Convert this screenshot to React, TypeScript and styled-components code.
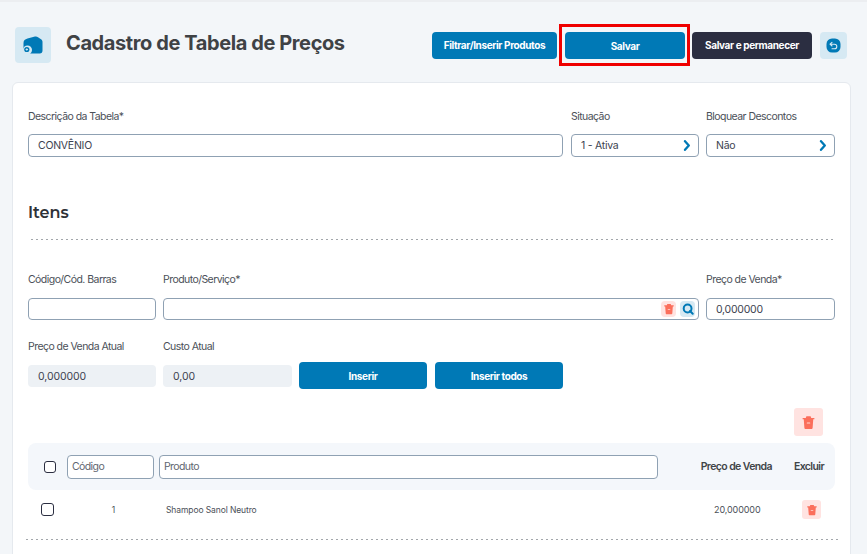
import React from "react";
import styled, { createGlobalStyle } from "styled-components";

const Global = createGlobalStyle`
  html, body { margin: 0; padding: 0; height: 100%; overflow: hidden; background: #f3f6f9; }
  * { box-sizing: border-box; }
  body { font-family: Inter, "Liberation Sans", sans-serif; color: #3f4448; }
`;

const Page = styled.div`
  width: 867px;
  height: 554px;
  overflow: hidden;
  border-top: 2px solid #eceef1;
  padding: 0 16px 0 12px;
`;
const Header = styled.header`
  display: flex;
  align-items: center;
  height: 80px;
  padding: 6px 4px 0 3px;
`;
const HeaderIconBox = styled.div`
  width: 36px;
  height: 36px;
  border-radius: 4px;
  background: #d6e9f3;
  display: flex;
  align-items: center;
  justify-content: center;
`;
const Title = styled.h1`
  flex: 1;
  margin: -4px 0 0 15px;
  font-size: 20px;
  line-height: 28px;
  font-weight: 700;
  letter-spacing: -0.4px;
  color: #3f4245;
`;
const Actions = styled.div`
  display: flex;
  align-items: center;
`;
const ActionButton = styled.button<{ $w: number; $dark?: boolean }>`
  width: ${(p) => p.$w}px;
  height: 27px;
  padding: 0;
  border: 0;
  border-radius: 4px;
  background: ${(p) => (p.$dark ? "#2b2e41" : "#0079b6")};
  color: #fff;
  font: 700 10px Inter, sans-serif;
  letter-spacing: -0.38px;
`;
const Highlight = styled.div`
  border: 3px solid #ef0000;
  padding: 5px 2px 4px 3px;
  margin: 0 2px;
  display: flex;
`;
const BackBox = styled.div`
  width: 27px;
  height: 27px;
  margin-left: 8px;
  border-radius: 4px;
  background: #d6e9f3;
  display: flex;
  align-items: center;
  justify-content: center;
`;
const Card = styled.main`
  height: 480px;
  background: #fff;
  border: 1px solid #e5e9ee;
  border-radius: 6px;
  padding: 26px 15px 0;
`;
const Row = styled.div<{ $mt?: number }>`
  display: flex;
  gap: 7px;
  align-items: flex-end;
  margin-top: ${(p) => p.$mt ?? 0}px;
`;
const Field = styled.div<{ $w?: number }>`
  ${(p) => (p.$w ? `width: ${p.$w}px; flex: none;` : "flex: 1;")}
  position: relative;
`;
const WideField = styled(Field)`
  margin-right: 1px;
`;
const Label = styled.div<{ $mb?: number }>`
  font-size: 10.5px;
  line-height: 16px;
  height: 16px;
  letter-spacing: -0.55px;
  color: #4b5058;
  margin-bottom: ${(p) => p.$mb ?? 10}px;
  white-space: nowrap;
`;
const Control = styled.div<{ $h?: number }>`
  height: ${(p) => p.$h ?? 23}px;
  border: 1px solid #8fa1b3;
  border-radius: 4px;
  background: #fff;
  padding: 0 7px 0 9px;
  display: flex;
  align-items: center;
  justify-content: space-between;
  font-size: 10.5px;
  letter-spacing: -0.25px;
  color: #3d4350;
`;
const ReadOnly = styled.div`
  height: 22px;
  margin-bottom: 2px;
  border-radius: 4px;
  background: #edf1f5;
  padding: 0 10px;
  display: flex;
  align-items: center;
  font-size: 10.5px;
  letter-spacing: -0.1px;
  color: #3d4350;
`;
const SectionTitle = styled.h2`
  margin: 46px 0 0;
  font: 600 16px/20px Montserrat, "Open Sans", Inter, sans-serif;
  color: #2f3238;
`;
const Dotted = styled.div<{ $mt: number; $ml: number; $mr: number }>`
  margin: ${(p) => p.$mt}px ${(p) => p.$mr}px 0 ${(p) => p.$ml}px;
  height: 1px;
  background: repeating-linear-gradient(to right, #a3a7ab 0 2px, transparent 2px 5px);
`;
const InlineIcons = styled.div`
  position: absolute;
  right: 4px;
  bottom: 3px;
  display: flex;
  gap: 4px;
`;
const SmallIcon = styled.div<{ $tone: "red" | "blue" }>`
  width: 15px;
  height: 16px;
  border-radius: 4px;
  background: ${(p) => (p.$tone === "red" ? "#ffe3e1" : "#d6e9f3")};
  display: flex;
  align-items: center;
  justify-content: center;
`;
const InsertButton = styled.button`
  width: 128px;
  height: 27px;
  padding: 0;
  border: 0;
  border-radius: 4px;
  background: #0079b6;
  color: #fff;
  font: 700 10px Inter, sans-serif;
  letter-spacing: -0.38px;
`;
const InsertAllButton = styled(InsertButton)`
  margin-left: 1px;
`;
const BulkRow = styled.div`
  display: flex;
  justify-content: flex-end;
  margin: 19px 12px 0 0;
`;
const TrashBox = styled.div<{ $s: number; $h: number }>`
  width: ${(p) => p.$s}px;
  height: ${(p) => p.$h}px;
  border-radius: 3px;
  background: #ffe3e1;
  display: flex;
  align-items: center;
  justify-content: center;
`;
const TableHead = styled.div`
  margin-top: 7px;
  height: 47px;
  background: #f4f7fb;
  border-radius: 8px;
  display: flex;
  align-items: center;
  padding-left: 16px;
`;
const Check = styled.span<{ $s: number }>`
  width: ${(p) => p.$s}px;
  height: ${(p) => p.$s}px;
  flex: none;
  border: 1.3px solid #2b2e41;
  border-radius: 3px;
  background: #fff;
  display: block;
`;
const FilterInput = styled(Control)<{ $w: number; $ml: number }>`
  width: ${(p) => p.$w}px;
  margin-left: ${(p) => p.$ml}px;
  padding: 0 4px;
  height: 24px;
  font-size: 10.5px;
  letter-spacing: -0.6px;
  color: #5f6670;
`;
const HeadCell = styled.div<{ $w: number; $ml: number }>`
  width: ${(p) => p.$w}px;
  margin-left: ${(p) => p.$ml}px;
  font-size: 10.5px;
  font-weight: 600;
  letter-spacing: -0.6px;
  color: #3f4448;
  white-space: nowrap;
  text-align: right;
`;
const BodyRow = styled.div`
  height: 39px;
  display: flex;
  align-items: center;
  padding-left: 13px;
  font-size: 8.5px;
  letter-spacing: -0.1px;
  color: #4b5058;
`;
const CodeCell = styled.div`
  width: 61px;
  text-align: right;
`;
const NameCell = styled.div`
  width: 548px;
  margin-left: 51px;
`;
const PriceCell = styled.div`
  width: 45px;
  font-size: 9px;
  text-align: right;
`;
const RowAction = styled.div`
  margin-left: 43px;
`;

const Trash = ({ s = 12 }: { s?: number }) => (
  <svg width={s} height={s} viewBox="0 0 12 12" aria-hidden="true">
    <path
      d="M4.3 1h3.400l.5 1.300h2.500v1.100H1.300V2.300h2.500zM2.200 3.400h7.600l-.5 6.800c0 .6-.5 1-1 1H3.700c-.5 0-1-.4-1-1z"
      fill="#fb6f5c"
    />
    <rect x="4.600" y="6" width="2.800" height=".8" rx=".4" fill="#ffd9d4" />
  </svg>
);
const Search = () => (
  <svg width="12" height="12" viewBox="0 0 12 12" aria-hidden="true">
    <circle cx="5.600" cy="5.500" r="3.900" fill="none" stroke="#0079b6" strokeWidth="2" />
    <path d="M8 8l2.700 2.700" stroke="#0079b6" strokeWidth="2" strokeLinecap="round" />
  </svg>
);
const Chevron = () => (
  <svg width="8" height="11" viewBox="0 0 8 11" aria-hidden="true">
    <path d="M2 1.200l3.800 4.300L2 9.800" fill="none" stroke="#0079b6" strokeWidth="2.300" strokeLinecap="round" strokeLinejoin="round" />
  </svg>
);
const Back = () => (
  <svg width="15" height="15" viewBox="0 0 15 15" aria-hidden="true">
    <rect x=".5" y=".5" width="14" height="14" rx="5.500" fill="#0079b6" />
    <path d="M6 4.300L4 6.200l2 1.800M4.300 6.200h4.200a2.300 2.300 0 010 4.600H6" fill="none" stroke="#d6e9f3" strokeWidth="1.100" strokeLinecap="round" strokeLinejoin="round" />
  </svg>
);
const Folder = () => (
  <svg width="20" height="18" viewBox="0 0 20 18" aria-hidden="true">
    <path
      d="M.5 7C.5 4.500 2 3.300 4.500 2.500L11 .8c1.700-.5 3-.4 4 .4l3 2c1 .7 1.500 1.500 1.500 2.800v8.800c0 1.500-1 2.700-2.700 2.700H5C2 17.500.5 15 .5 12z"
      fill="#0079b6"
    />
    <circle cx="4.500" cy="14" r="4.500" fill="#d6e9f3" />
    <circle cx="3.800" cy="13.500" r="2.600" fill="#0079b6" />
    <path d="M2.600 13.500h2.400M3.800 12.300v2.400" stroke="#d6e9f3" strokeWidth=".9" />
  </svg>
);

export default function App() {
  return (
    <Page>
      <Global />
      <Header>
        <HeaderIconBox>
          <Folder />
        </HeaderIconBox>
        <Title>Cadastro de Tabela de Preços</Title>
        <Actions>
          <ActionButton $w={125}>Filtrar/Inserir Produtos</ActionButton>
          <Highlight>
            <ActionButton $w={120}>Salvar</ActionButton>
          </Highlight>
          <ActionButton $w={120} $dark>Salvar e permanecer</ActionButton>
          <BackBox>
            <Back />
          </BackBox>
        </Actions>
      </Header>
      <Card>
        <Row>
          <WideField>
            <Label $mb={9}>Descrição da Tabela*</Label>
            <Control>CONVÊNIO</Control>
          </WideField>
          <Field $w={128}>
            <Label $mb={9}>Situação</Label>
            <Control>1 - Ativa<Chevron /></Control>
          </Field>
          <Field $w={129}>
            <Label $mb={9}>Bloquear Descontos</Label>
            <Control>Não<Chevron /></Control>
          </Field>
        </Row>
        <SectionTitle>Itens</SectionTitle>
        <Dotted $mt={16} $ml={3} $mr={2} />
        <Row $mt={32}>
          <Field $w={128}>
            <Label>Código/Cód. Barras</Label>
            <Control $h={22} />
          </Field>
          <Field>
            <Label>Produto/Serviço*</Label>
            <Control $h={22} />
            <InlineIcons>
              <SmallIcon $tone="red"><Trash s={12} /></SmallIcon>
              <SmallIcon $tone="blue"><Search /></SmallIcon>
            </InlineIcons>
          </Field>
          <Field $w={129}>
            <Label>Preço de Venda*</Label>
            <Control $h={22}>0,000000</Control>
          </Field>
        </Row>
        <Row $mt={19}>
          <Field $w={128}>
            <Label>Preço de Venda Atual</Label>
            <ReadOnly>0,000000</ReadOnly>
          </Field>
          <Field $w={129}>
            <Label>Custo Atual</Label>
            <ReadOnly>0,00</ReadOnly>
          </Field>
          <InsertButton>Inserir</InsertButton>
          <InsertAllButton>Inserir todos</InsertAllButton>
        </Row>
        <BulkRow>
          <TrashBox $s={29} $h={28}><Trash s={15} /></TrashBox>
        </BulkRow>
        <TableHead>
          <Check $s={12} />
          <FilterInput $w={87} $ml={11}>Código</FilterInput>
          <FilterInput $w={499} $ml={5}>Produto</FilterInput>
          <HeadCell $w={114} $ml={0}>Preço de Venda</HeadCell>
          <HeadCell $w={32} $ml={20}>Excluir</HeadCell>
        </TableHead>
        <BodyRow>
          <Check $s={13} />
          <CodeCell>1</CodeCell>
          <NameCell>Shampoo Sanol Neutro</NameCell>
          <PriceCell>20,000000</PriceCell>
          <RowAction>
            <TrashBox $s={19} $h={19}><Trash s={12} /></TrashBox>
          </RowAction>
        </BodyRow>
        <Dotted $mt={10} $ml={-2} $mr={-3} />
      </Card>
    </Page>
  );
}
